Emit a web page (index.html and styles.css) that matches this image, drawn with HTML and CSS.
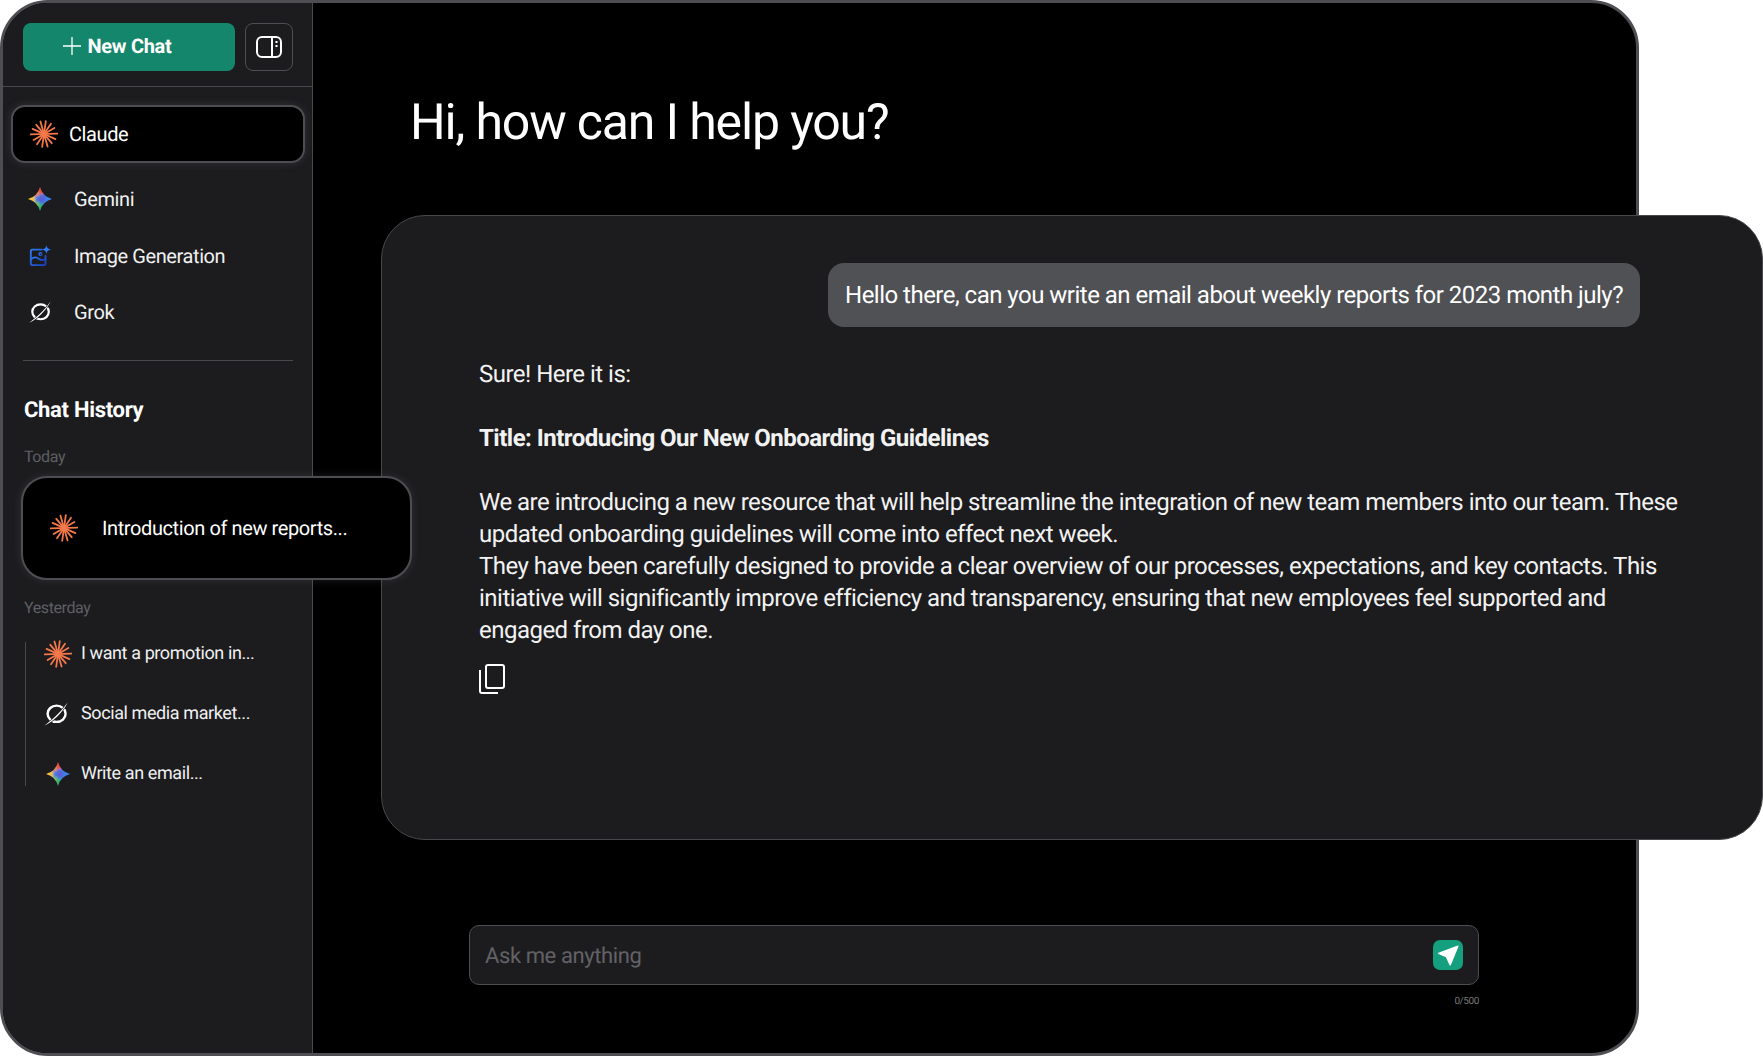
FILE: index.html

```html
<!DOCTYPE html>
<html lang="en">
<head>
    <meta charset="UTF-8">
    <title>Chat</title>
    <link rel="stylesheet" href="styles.css">
</head>
<body>
<svg class="icon-defs" width="0" height="0">
    <defs>
        <symbol id="icon-claude" viewBox="0 0 28 28">
            <g stroke="#f4784a" stroke-width="1.800" stroke-linecap="round">
                <line x1="14" y1="1" x2="14" y2="27" transform="rotate(8 14 14)"/>
                <line x1="14" y1="1.500" x2="14" y2="26.500" transform="rotate(34 14 14)"/>
                <line x1="14" y1="2" x2="14" y2="26" transform="rotate(60 14 14)"/>
                <line x1="14" y1="0.500" x2="14" y2="27.500" transform="rotate(88 14 14)"/>
                <line x1="14" y1="1.500" x2="14" y2="26.500" transform="rotate(114 14 14)"/>
                <line x1="14" y1="2" x2="14" y2="26" transform="rotate(140 14 14)"/>
                <line x1="14" y1="1" x2="14" y2="27" transform="rotate(164 14 14)"/>
            </g>
            <circle cx="14" cy="14" r="2.500" fill="#f4784a"/>
        </symbol>
        <clipPath id="gemini-shape">
            <path d="M12 0Q14.500 9.500 24 12Q14.500 14.500 12 24Q9.500 14.500 0 12Q9.500 9.500 12 0Z"/>
        </clipPath>
        <filter id="gemini-blur" x="-30%" y="-30%" width="160%" height="160%">
            <feGaussianBlur stdDeviation="1.200"/>
        </filter>
        <symbol id="icon-gemini" viewBox="0 0 24 24">
            <g clip-path="url(#gemini-shape)">
                <g filter="url(#gemini-blur)">
                    <rect x="0" y="0" width="24" height="24" fill="#3f7fe0"/>
                    <rect x="-2" y="8" width="9" height="8" fill="#f2c33c"/>
                    <rect x="8" y="-2" width="8" height="9" fill="#e8503f"/>
                    <rect x="8" y="17" width="8" height="9" fill="#2fb06c"/>
                    <rect x="17" y="8" width="9" height="8" fill="#3a82f0"/>
                    <rect x="5" y="15" width="6" height="5" fill="#7cbf55"/>
                    <rect x="5" y="4" width="6" height="5" fill="#e68a3c"/>
                    <circle cx="14" cy="12" r="3.500" fill="#5a5fd6"/>
                </g>
            </g>
        </symbol>
        <linearGradient id="image-blue" x1="0" y1="0" x2="1" y2="1">
            <stop offset="0" stop-color="#2f7bf0"/>
            <stop offset="1" stop-color="#1b3fc0"/>
        </linearGradient>
        <symbol id="icon-image" viewBox="0 0 24 24">
            <g fill="none" stroke="url(#image-blue)" stroke-width="2" stroke-linejoin="round" stroke-linecap="round">
                <path d="M14 5H3.500A1.500 1.500 0 0 0 2 6.500V20.500A1.500 1.500 0 0 0 3.500 22H16.500A1.500 1.500 0 0 0 18 20.500V12"/>
                <path d="M2 15.500C6 12.500 8 13 10.500 15C13 17 15 17 18 15.500"/>
                <circle cx="12.500" cy="10" r="1.500" stroke-width="1.500"/>
            </g>
            <path d="M19 0C19.400 3 20.500 4.200 24 5C20.500 5.800 19.400 7 19 10C18.600 7 17.500 5.800 14 5C17.500 4.200 18.600 3 19 0Z" fill="#2f7bf0"/>
        </symbol>
        <symbol id="icon-grok" viewBox="0 0 20 20">
            <ellipse cx="10.500" cy="9.800" rx="7.500" ry="6.800" fill="none" stroke="#fff" stroke-width="2"/>
            <path d="M19.800 0.200C15 7 8 14 0.200 19.800C7.500 16.500 15.500 9 19.800 0.200Z" fill="#fff" stroke="#1c1c1f" stroke-width="1" paint-order="stroke"/>
        </symbol>
    </defs>
</svg>

<div class="frame">
    <aside class="sidebar">
        <div class="side-top">
            <button class="new-chat">
                <svg class="plus" viewBox="0 0 18 18" width="18" height="18"><path d="M9 0V18M0 9H18" stroke="#fff" stroke-width="1.300"/></svg>
                New Chat
            </button>
            <button class="toggle">
                <svg viewBox="0 0 28 24" width="28" height="24" fill="none" stroke="#fff" stroke-width="2">
                    <rect x="2" y="2" width="24" height="20" rx="5"/>
                    <path d="M17 2V22"/>
                    <path d="M20.500 7H22.500M20.500 11H22.500" stroke-width="2.200"/>
                </svg>
            </button>
        </div>

        <div class="model active">
            <svg class="ic-claude"><use href="#icon-claude"/></svg>
            <span>Claude</span>
        </div>
        <div class="model">
            <svg class="ic-model ic-gemini"><use href="#icon-gemini"/></svg>
            <span>Gemini</span>
        </div>
        <div class="model">
            <svg class="ic-model"><use href="#icon-image"/></svg>
            <span>Image Generation</span>
        </div>
        <div class="model">
            <svg class="ic-model"><use href="#icon-grok"/></svg>
            <span>Grok</span>
        </div>

        <hr class="side-line">

        <h2 class="history-title">Chat History</h2>
        <div class="history-day">Today</div>
        <div class="history-card">
            <svg class="ic-claude"><use href="#icon-claude"/></svg>
            <span>Introduction of new reports...</span>
        </div>
        <div class="history-day day-second">Yesterday</div>
        <div class="history-list">
            <div class="history-row">
                <svg class="ic-claude"><use href="#icon-claude"/></svg>
                <span>I want a promotion in...</span>
            </div>
            <div class="history-row">
                <svg class="ic-small ic-grok"><use href="#icon-grok"/></svg>
                <span>Social media market...</span>
            </div>
            <div class="history-row">
                <svg class="ic-small"><use href="#icon-gemini"/></svg>
                <span>Write an email...</span>
            </div>
        </div>
    </aside>

    <main class="main">
        <h1 class="greeting">Hi, how can I help you?</h1>

        <section class="chat-panel">
            <div class="bubble">Hello there, can you write an email about weekly reports for 2023 month july?</div>
            <div class="answer">
                <p>Sure! Here it is:</p>
                <p><strong>Title: Introducing Our New Onboarding Guidelines</strong></p>
                <p>We are introducing a new resource that will help streamline the integration of new team members into our team. These updated onboarding guidelines will come into effect next week.<br>
                They have been carefully designed to provide a clear overview of our processes, expectations, and key contacts. This initiative will significantly improve efficiency and transparency, ensuring that new employees feel supported and engaged from day one.</p>
            </div>
            <svg class="copy" viewBox="0 0 26 30" width="26" height="30" fill="none" stroke="#fff" stroke-width="2">
                <rect x="7" y="1" width="18" height="23" rx="2"/>
                <path d="M1 6V27A2 2 0 0 0 3 29H19"/>
            </svg>
        </section>

        <div class="composer">
            <div class="ask">
                <span class="ask-text">Ask me anything</span>
                <button class="send">
                    <svg viewBox="0 0 20 20" width="22" height="22"><path d="M19 2L1.500 8.500L8.500 11.500L12 19Z" fill="#fff" stroke="#fff" stroke-width="1.200" stroke-linejoin="round"/></svg>
                </button>
            </div>
            <div class="count">0/500</div>
        </div>
    </main>
</div>
</body>
</html>
```

FILE: styles.css

```css
* {
    box-sizing: border-box;
}

body {
    margin: 0;
    background-color: #fff;
    font-family: Roboto, "Liberation Sans", sans-serif;
    letter-spacing: -0.025em;
    text-rendering: geometricPrecision;
    color: #fff;
    overflow: hidden;
}

.icon-defs {
    position: absolute;
}

.frame {
    display: flex;
    width: 1639px;
    height: 1056px;
    background-color: #000;
    border: 3px solid #4d4d52;
    border-radius: 48px;
}

.sidebar {
    flex: 0 0 310px;
    min-width: 0;
    background-color: #1c1c1f;
    border-right: 1px solid #4a4a4e;
    border-radius: 45px 0 0 45px;
}

.side-top {
    display: flex;
    gap: 10px;
    padding: 20px 19px 15px 20px;
    border-bottom: 1px solid #49494d;
}

.new-chat {
    display: flex;
    align-items: center;
    justify-content: center;
    gap: 7px;
    width: 212px;
    height: 48px;
    padding: 0 24px 2px 0;
    background-color: #14866b;
    border: none;
    border-radius: 8px;
    color: #fff;
    font-family: inherit;
    font-size: 20px;
    font-weight: 700;
    letter-spacing: -0.3px;
    text-rendering: inherit;
}

.toggle {
    flex: none;
    display: flex;
    align-items: center;
    justify-content: center;
    width: 48px;
    height: 48px;
    padding: 0;
    background-color: transparent;
    border: 1px solid #4e4e52;
    border-radius: 8px;
}

.model {
    display: flex;
    align-items: center;
    height: 56.5px;
    padding-left: 26px;
    font-size: 20px;
    color: #f0f0f0;
}

.model span {
    margin-left: 23px;
}

.model.active {
    height: 58px;
    width: 294px;
    margin: 18px 0 8px 8px;
    padding-left: 17px;
    background-color: #000;
    border: 2px solid #4d4d52;
    border-radius: 14px;
    box-shadow: 0 0 8px rgba(120, 120, 125, 0.25);
    color: #fff;
}

.model.active span {
    margin-left: 11px;
}

.ic-claude {
    flex: none;
    width: 28px;
    height: 28px;
}

.ic-model {
    flex: none;
    width: 22px;
    height: 22px;
}

.ic-gemini {
    width: 24px;
    height: 24px;
    margin: 0 -1px;
}

.ic-small {
    flex: none;
    width: 24px;
    height: 24px;
    margin: 0 2px;
}

.ic-small.ic-grok {
    margin: 0 4px 0 0;
}

.side-line {
    height: 1px;
    margin: 19px 19px 0 20px;
    background-color: #49494d;
    border: none;
}

.history-title {
    margin: 36px 0 0 21px;
    font-size: 22px;
    line-height: 28px;
    font-weight: 700;
    letter-spacing: -0.3px;
}

.history-day {
    margin: 22px 0 0 21px;
    font-size: 16px;
    line-height: 20px;
    color: #5f5f63;
}

.history-card {
    position: relative;
    z-index: 2;
    display: flex;
    align-items: center;
    width: 391px;
    height: 104px;
    margin: 9px 0 0 18px;
    padding-left: 27px;
    background-color: #000;
    border: 2px solid #4d4d52;
    border-radius: 26px;
    box-shadow: 0 0 8px rgba(120, 120, 125, 0.25);
    font-size: 20px;
}

.history-card span {
    margin-left: 24px;
}

.day-second {
    margin-top: 18px;
}

.history-list {
    display: flex;
    flex-direction: column;
    gap: 36px;
    margin: 24px 0 0 22px;
    padding-left: 18px;
    border-left: 1px solid #49494d;
}

.history-row {
    display: flex;
    align-items: center;
    gap: 9px;
    height: 24px;
    font-size: 18px;
    color: #f0f0f0;
}

.main {
    flex: 1;
    min-width: 0;
}

.greeting {
    margin: 88px 0 0 97px;
    font-size: 50px;
    line-height: 64px;
    font-weight: 400;
    letter-spacing: -0.0232em;
}

.chat-panel {
    display: flex;
    flex-direction: column;
    width: 1382px;
    height: 625px;
    margin: 60px 0 0 68px;
    padding: 47px 72px 0 97px;
    background-color: #1c1c1f;
    border: 1px solid #48484c;
    border-radius: 44px;
}

.bubble {
    align-self: flex-end;
    margin-right: 50px;
    padding: 16px 17px;
    background-color: #505155;
    border-radius: 16px;
    font-size: 24px;
    line-height: 32px;
    letter-spacing: -0.0215em;
    white-space: nowrap;
}

.answer {
    margin-top: 31px;
    font-size: 24px;
    line-height: 32px;
    letter-spacing: -0.0215em;
    color: #f2f2f2;
}

.answer p {
    margin: 0 0 32px;
}

.answer p:last-child {
    margin-bottom: 0;
}

.answer strong {
    font-weight: 700;
}

.copy {
    margin-top: 18px;
}

.composer {
    width: 1010px;
    margin: 85px 0 0 156px;
}

.ask {
    display: flex;
    align-items: center;
    justify-content: space-between;
    height: 60px;
    padding: 0 15px 0 15px;
    background-color: #1c1c1f;
    border: 1px solid #4e4e52;
    border-radius: 10px;
}

.ask-text {
    padding-top: 2px;
    font-size: 22px;
    color: #626266;
}

.send {
    display: flex;
    align-items: center;
    justify-content: center;
    width: 30px;
    height: 30px;
    padding: 0;
    background-color: #14a07e;
    border: none;
    border-radius: 7px;
}

.count {
    margin-top: 11px;
    text-align: right;
    font-size: 10px;
    line-height: 12px;
    color: #77777b;
}
```
